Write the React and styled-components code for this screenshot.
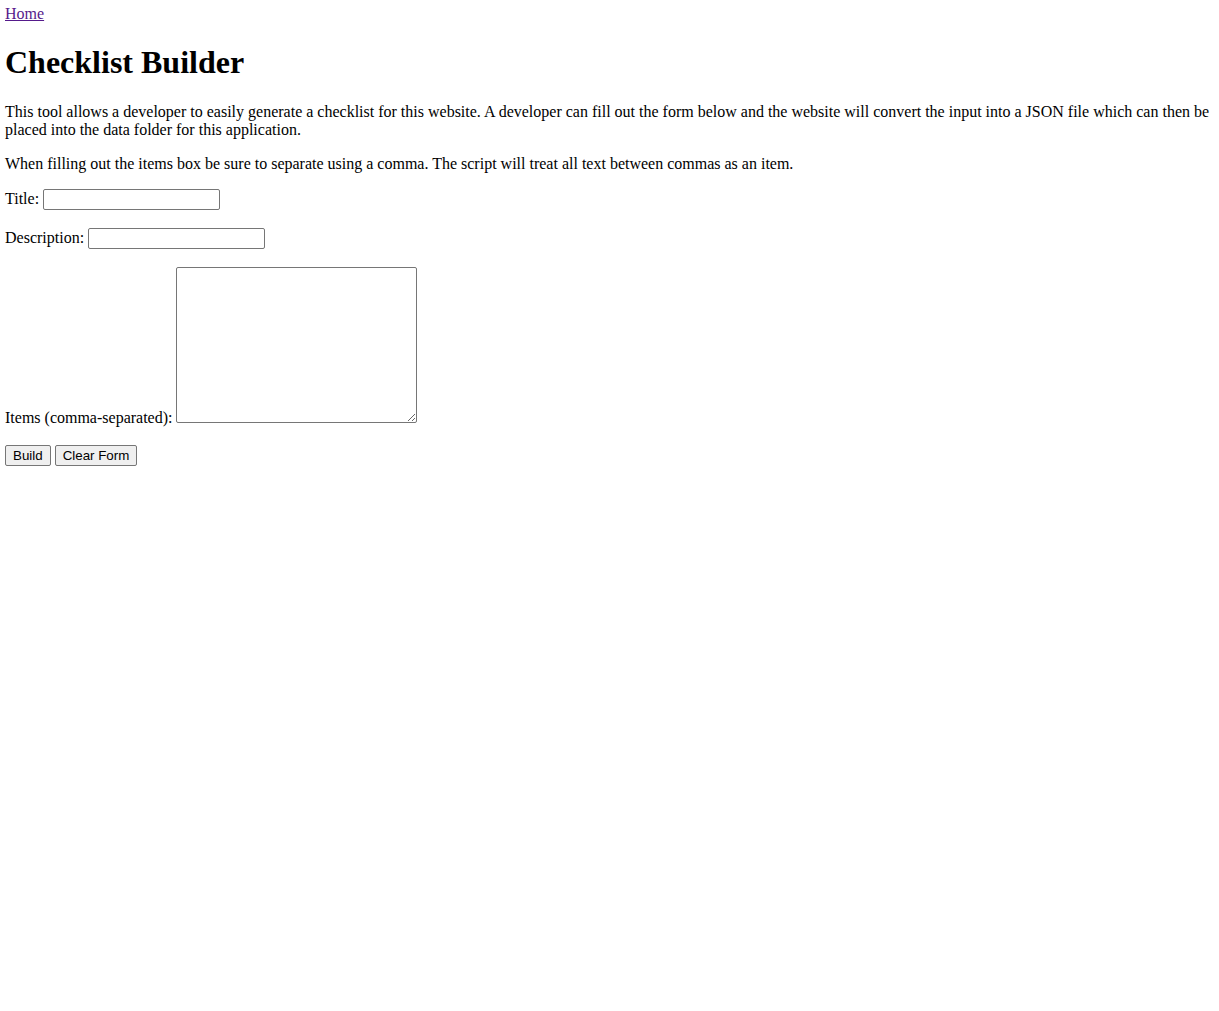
import styled, { createGlobalStyle } from "styled-components";

const GlobalStyle = createGlobalStyle`
  body {
    margin: 5px;
    font-family: "Liberation Serif", "Times New Roman", serif;
    font-size: 16px;
    color: #000;
    background: #fff;
  }
`;

const Nav = styled.div``;

const HomeLink = styled.a`
  color: #551a8b;
  text-decoration: underline;
`;

const Title = styled.h1`
  font-size: 32px;
  font-weight: 700;
  margin: 21.44px 0;
`;

const Text = styled.p`
  margin: 16px 0;
`;

const Field = styled.p`
  margin: 16px 0;
  padding-bottom: 2px;
`;

const TextInput = styled.input`
  box-sizing: border-box;
  width: 177px;
  height: 21px;
  padding: 1px 2px;
  border: 1px solid #767676;
  border-radius: 2px;
  font-family: "Liberation Sans", Arial, sans-serif;
  font-size: 13.333px;
  background: #fff;
`;

const ItemsBox = styled.textarea`
  box-sizing: border-box;
  width: 241px;
  height: 156px;
  padding: 2px;
  border: 1px solid #767676;
  border-radius: 2px;
  font-family: "Liberation Mono", monospace;
  font-size: 13.333px;
  background: #fff;
`;

const Button = styled.button`
  box-sizing: border-box;
  height: 21px;
  padding: 1px 7px;
  border: 1px solid #767676;
  border-radius: 2px;
  background: #efefef;
  color: #000;
  font-family: "Liberation Sans", Arial, sans-serif;
  font-size: 13.333px;
`;

export default function App() {
  return (
    <>
      <GlobalStyle />
      <Nav>
        <HomeLink href="#">Home</HomeLink>
      </Nav>
      <Title>Checklist Builder</Title>
      <Text>
        This tool allows a developer to easily generate a checklist for this website. A developer can fill out the
        form below and the website will convert the input into a JSON file which can then be placed into the data
        folder for this application.
      </Text>
      <Text>
        When filling out the items box be sure to separate using a comma. The script will treat all text between
        commas as an item.
      </Text>
      <form onSubmit={(e) => e.preventDefault()}>
        <Field>
          <label>
            Title: <TextInput type="text" />
          </label>
        </Field>
        <Field>
          <label>
            Description: <TextInput type="text" />
          </label>
        </Field>
        <Field>
          <label>
            Items (comma-separated): <ItemsBox />
          </label>
        </Field>
        <Field>
          <Button type="submit">Build</Button> <Button type="reset">Clear Form</Button>
        </Field>
      </form>
    </>
  );
}
